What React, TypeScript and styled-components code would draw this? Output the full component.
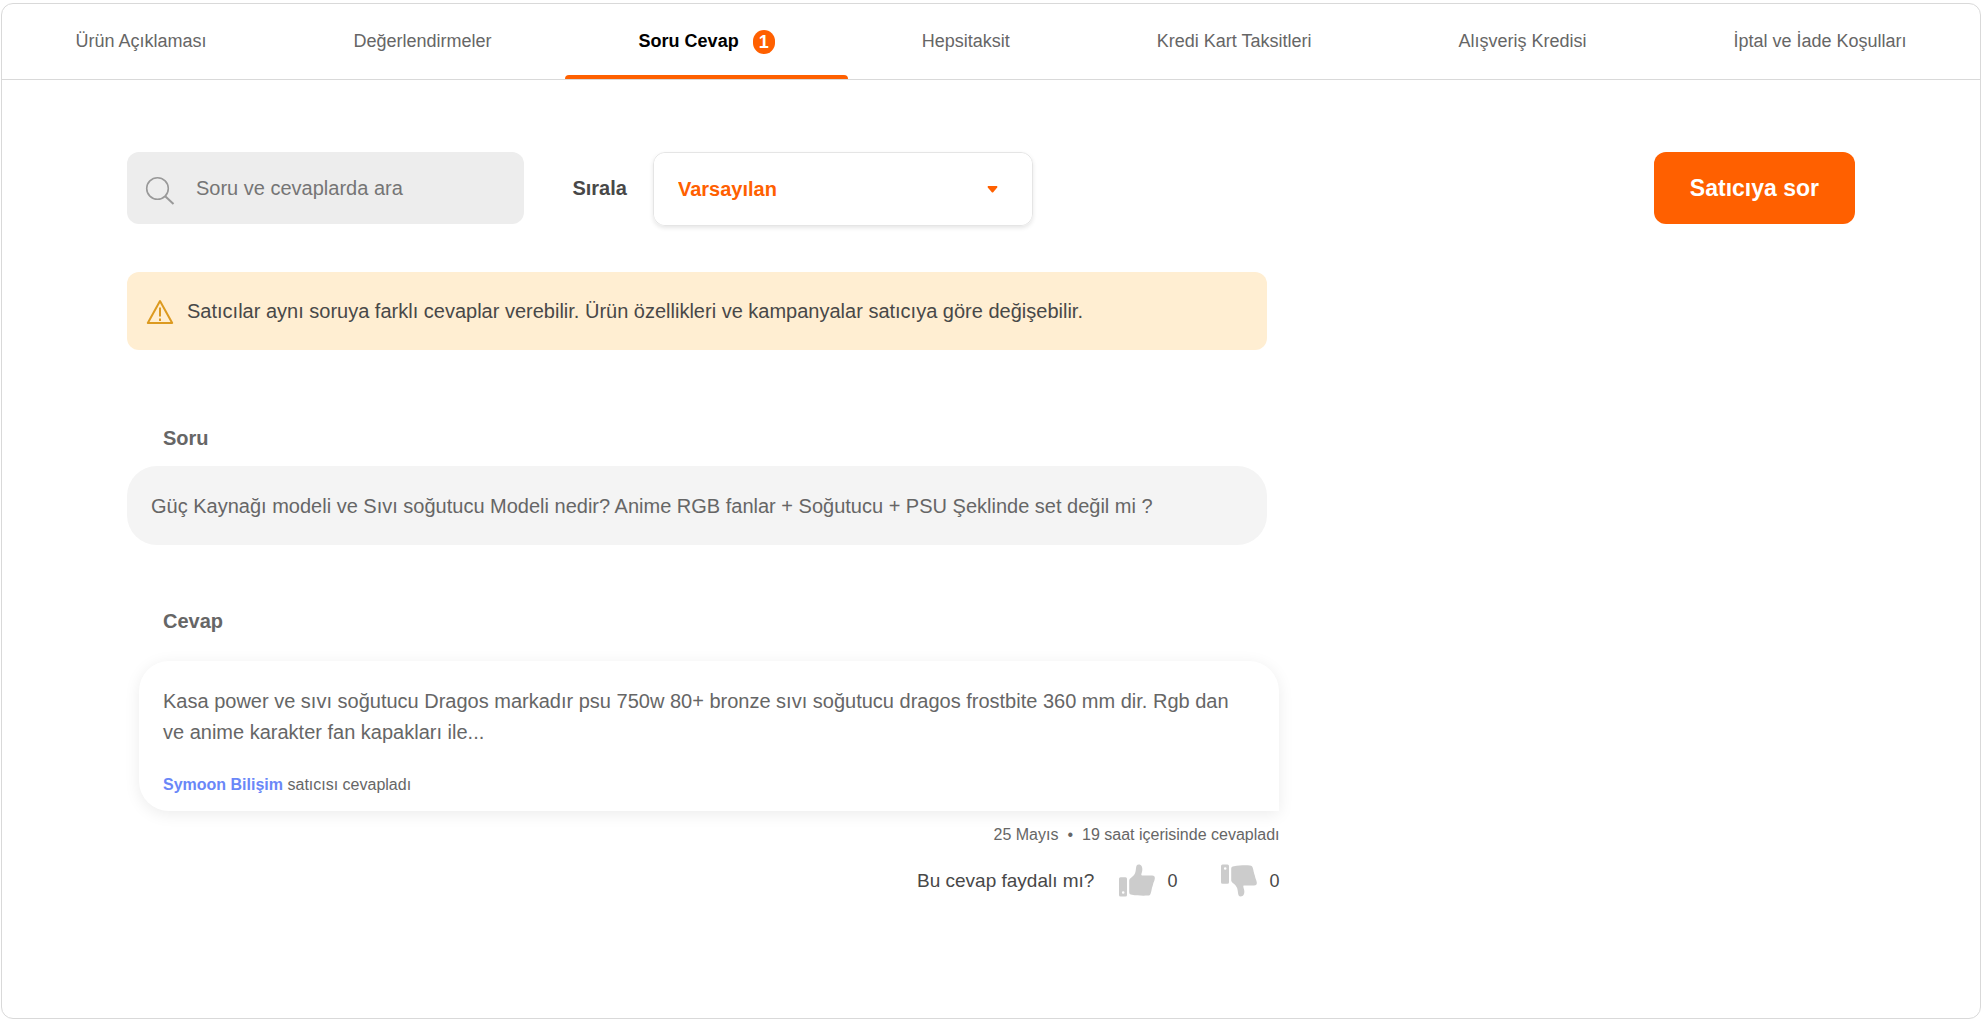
import React, { useState } from "react";
import styled, { createGlobalStyle } from "styled-components";

const GlobalStyle = createGlobalStyle`
  *, *::before, *::after { box-sizing: border-box; }
  body {
    margin: 0;
    background: #fff;
    color: #666;
    font-family: "Liberation Sans", Arial, sans-serif;
    font-size: 20px;
    line-height: 31px;
  }
  button, input, select { font: inherit; color: inherit; margin: 0; }
  h3, p { margin: 0; }
`;

const Panel = styled.main`
  margin: 3px 0 5px 1px;
  border: 1px solid #d9d9d9;
  border-radius: 12px;
  overflow: hidden;
`;

const Tabs = styled.div`
  display: flex;
  border-bottom: 1px solid #d9d9d9;
`;

const Tab = styled.button<{ $active: boolean }>`
  position: relative;
  flex: 1 1 auto;
  display: flex;
  align-items: center;
  justify-content: center;
  gap: 14px;
  height: 75px;
  padding: 0;
  border: 0;
  background: none;
  font-size: 18px;
  font-weight: ${(p) => (p.$active ? 700 : 400)};
  color: ${(p) => (p.$active ? "#000" : "#666")};
  cursor: pointer;

  &::after {
    content: "";
    display: ${(p) => (p.$active ? "block" : "none")};
    position: absolute;
    left: 0;
    right: 0;
    bottom: 0;
    height: 4px;
    border-radius: 4px 4px 0 0;
    background: #ff6000;
  }
`;

const Count = styled.span`
  width: 22px;
  height: 24px;
  border-radius: 12px;
  background: #ff6000;
  color: #fff;
  line-height: 24px;
  text-align: center;
`;

const Content = styled.section`
  padding: 72px 125px 121px;
`;

const Toolbar = styled.div`
  display: flex;
  align-items: flex-start;
  margin-bottom: 46px;
`;

const SearchBox = styled.label`
  display: flex;
  align-items: center;
  gap: 20px;
  flex: 0 0 23%;
  height: 72px;
  padding: 0 18px;
  border-radius: 12px;
  background: #ededed;

  svg { flex: none; margin-top: 6px; }
`;

const SearchInput = styled.input`
  flex: 1;
  min-width: 0;
  padding: 0;
  border: 0;
  outline: 0;
  background: none;
  &::placeholder { color: #757575; opacity: 1; }
`;

const SortLabel = styled.label`
  margin: 0 26px 0 48px;
  line-height: 72px;
  font-weight: 700;
  color: #484848;
`;

const SelectBox = styled.div`
  display: grid;
  align-items: center;
  flex: 0 0 22%;
  border: 1px solid #e5e5e5;
  border-radius: 12px;
  box-shadow: 0 2px 4px rgba(0, 0, 0, 0.1);

  > * { grid-area: 1 / 1; }
  svg { justify-self: end; margin-right: 34px; pointer-events: none; }
`;

const Select = styled.select`
  appearance: none;
  width: 100%;
  height: 72px;
  padding: 0 24px;
  border: 0;
  border-radius: 12px;
  outline: 0;
  background: #fff;
  font-weight: 700;
  color: #ff6000;
`;

const AskButton = styled.button`
  height: 72px;
  margin-left: auto;
  padding: 0 36px;
  border: 0;
  border-radius: 12px;
  background: #ff6000;
  color: #fff;
  font-size: 23px;
  font-weight: 700;
  cursor: pointer;
`;

const Column = styled.div`
  width: 66%;
`;

const Notice = styled.div`
  display: flex;
  align-items: center;
  gap: 13px;
  padding: 24px 19px 23px;
  border-radius: 12px;
  background: #ffeed2;
  color: #484848;

  svg { flex: none; }
`;

const Heading = styled.h3`
  padding-left: 36px;
  font-size: 20px;
  line-height: 31px;
  font-weight: 700;
`;

const Question = styled.article`
  margin-top: 73px;
`;

const QuestionBubble = styled.p`
  margin-top: 12px;
  padding: 25px 24px 23px;
  border-radius: 30px;
  background: #f4f4f4;
`;

const Answer = styled.article`
  margin-top: 61px;
`;

const AnswerBody = styled.div`
  width: 100%;
  margin: 24px 0 0 12px;
`;

const AnswerBubble = styled.div`
  padding: 25px 36px 14px 24px;
  border-radius: 30px 30px 0 30px;
  background: #fff;
  box-shadow: 0 3px 16px rgba(0, 0, 0, 0.08);
`;

const Seller = styled.p`
  margin-top: 25px;
  font-size: 16px;
  line-height: 24px;
`;

const SellerLink = styled.a`
  font-weight: 700;
  color: #6a87f8;
  text-decoration: none;
`;

const Meta = styled.p`
  display: flex;
  justify-content: flex-end;
  gap: 9px;
  margin-top: 12px;
  font-size: 16px;
  line-height: 24px;
`;

const Feedback = styled.div`
  display: flex;
  align-items: center;
  justify-content: flex-end;
  gap: 25px;
  margin-top: 17px;
  color: #484848;
  font-size: 19px;
`;

const Votes = styled.div`
  display: flex;
  gap: 44px;
`;

const Vote = styled.button`
  display: flex;
  align-items: center;
  gap: 12px;
  padding: 0;
  border: 0;
  background: none;
  font-size: 18px;
  line-height: 32px;
  cursor: pointer;
`;

const TABS = [
  "Ürün Açıklaması",
  "Değerlendirmeler",
  "Soru Cevap",
  "Hepsitaksit",
  "Kredi Kart Taksitleri",
  "Alışveriş Kredisi",
  "İptal ve İade Koşulları",
];

const SearchIcon = () => (
  <svg width="31" height="30" viewBox="0 0 31 30" fill="none" stroke="#999" strokeWidth="1.6" aria-hidden="true">
    <circle cx="12.5" cy="12.5" r="10.8" />
    <path d="M20.2 20.2 28.5 28" strokeWidth="2" />
  </svg>
);

const WarningIcon = () => (
  <svg width="28" height="26" viewBox="0 0 28 26" fill="none" stroke="#dc9a20" strokeWidth="2" aria-hidden="true">
    <path d="M14 2 26.2 24H1.8Z" strokeLinejoin="round" />
    <path d="M14 8.500V17.500M14 19.500V22" />
  </svg>
);

const CaretIcon = () => (
  <svg width="11" height="7" viewBox="0 0 11 7" fill="#ff6000" aria-hidden="true">
    <path d="M1.200 0H9.800Q11 .6 10.200 1.600L6.200 6.200Q5.500 6.900 4.800 6.200L.8 1.600Q0 .6 1.200 0Z" />
  </svg>
);

const ThumbIcon = ({ down = false }: { down?: boolean }) => (
  <svg width="36" height="33" viewBox="0 0 36 33" fill="#ccc" aria-hidden="true">
    <g transform={down ? "matrix(1 0 0 -1 0 33)" : undefined}>
      <path
        fillRule="evenodd"
        d="M1.500 13.200H6.500Q8 13.200 8 14.700V31Q8 32.500 6.500 32.500H1.500Q0 32.500 0 31V14.700Q0 13.200 1.500 13.200ZM4.200 27.200A1.300 1.300 0 1 0 4.200 29.800A1.300 1.300 0 1 0 4.200 27.200Z"
      />
      <path d="M10.200 16.500C10.200 14.500 13 13.600 14.600 11.600C16.500 9.300 16.600 7.500 17 4.200C17.200 2 17.800.5 19.700.5C22.500.5 23.600 3 23.300 6.200C23.100 8.300 22.200 9.800 22.300 10.800C22.400 11.400 22.800 11.500 23.500 11.500H33C35.200 11.500 36 12.700 35.800 14.500C35.500 17 34.600 18 34.200 19.800C33.700 22.300 33.200 22.700 32.700 25.200C32.400 27 32.300 27.300 31.800 29C31.400 30.600 30.800 31.600 28.800 31.600C23 31.700 17.500 31.700 13 30.800C11 30.400 10.200 30 10.200 28Z" />
    </g>
  </svg>
);

export default function App() {
  const [active, setActive] = useState(2);
  const [query, setQuery] = useState("");

  return (
    <>
      <GlobalStyle />
      <Panel>
        <Tabs role="tablist">
          {TABS.map((label, i) => (
            <Tab key={label} role="tab" aria-selected={i === active} $active={i === active} onClick={() => setActive(i)}>
              {label}
              {i === 2 && <Count>1</Count>}
            </Tab>
          ))}
        </Tabs>

        <Content>
          <Toolbar>
            <SearchBox>
              <SearchIcon />
              <SearchInput
                type="text"
                aria-label="Soru ve cevaplarda ara"
                placeholder="Soru ve cevaplarda ara"
                value={query}
                onChange={(e) => setQuery(e.target.value)}
              />
            </SearchBox>
            <SortLabel htmlFor="sort">Sırala</SortLabel>
            <SelectBox>
              <Select id="sort" defaultValue="default">
                <option value="default">Varsayılan</option>
              </Select>
              <CaretIcon />
            </SelectBox>
            <AskButton type="button">Satıcıya sor</AskButton>
          </Toolbar>

          <Column>
            <Notice>
              <WarningIcon />
              <p>Satıcılar aynı soruya farklı cevaplar verebilir. Ürün özellikleri ve kampanyalar satıcıya göre değişebilir.</p>
            </Notice>

            <Question>
              <Heading>Soru</Heading>
              <QuestionBubble>
                Güç Kaynağı modeli ve Sıvı soğutucu Modeli nedir? Anime RGB fanlar + Soğutucu + PSU Şeklinde set değil mi ?
              </QuestionBubble>
            </Question>

            <Answer>
              <Heading>Cevap</Heading>
              <AnswerBody>
                <AnswerBubble>
                  <p>
                    Kasa power ve sıvı soğutucu Dragos markadır psu 750w 80+ bronze sıvı soğutucu dragos frostbite 360 mm dir. Rgb dan ve anime karakter fan kapakları ile...
                  </p>
                  <Seller>
                    <SellerLink href="#">Symoon Bilişim</SellerLink> satıcısı cevapladı
                  </Seller>
                </AnswerBubble>
                <Meta>
                  <span>25 Mayıs</span>
                  <span>•</span>
                  <span>19 saat içerisinde cevapladı</span>
                </Meta>
                <Feedback>
                  <span>Bu cevap faydalı mı?</span>
                  <Votes>
                    <Vote type="button" aria-label="Faydalı: 0">
                      <ThumbIcon />
                      <span>0</span>
                    </Vote>
                    <Vote type="button" aria-label="Faydalı değil: 0">
                      <ThumbIcon down />
                      <span>0</span>
                    </Vote>
                  </Votes>
                </Feedback>
              </AnswerBody>
            </Answer>
          </Column>
        </Content>
      </Panel>
    </>
  );
}
